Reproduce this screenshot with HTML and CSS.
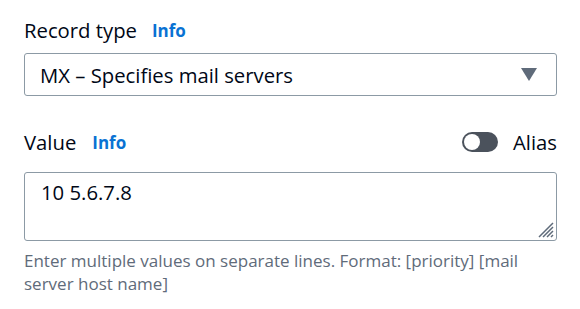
FILE: index.html
```html
<!DOCTYPE html>
<html lang="en">
  <head>
    <meta charset="UTF-8" />
    <meta name="viewport" content="width=device-width, initial-scale=1.0" />
    <title>Record</title>
    <link rel="stylesheet" href="styles.css">
  </head>

  <body>
    <div class="form">
      <div class="field">
        <div class="label-row">
          <span class="label">Record type</span>
          <a class="info" href="#">Info</a>
        </div>
        <div class="select">
          <span class="select-text">MX – Specifies mail servers</span>
          <svg class="caret" width="16" height="13" viewBox="0 0 16 13">
            <path d="M0 0 L16 0 L8 13 Z" fill="#5f6b7a" />
          </svg>
        </div>
      </div>

      <div class="field value">
        <div class="label-row between">
          <div class="label-group">
            <span class="label">Value</span>
            <a class="info" href="#">Info</a>
          </div>
          <label class="toggle">
            <span class="track"><span class="knob"></span></span>
            <span class="toggle-text">Alias</span>
          </label>
        </div>
        <div class="area-wrap">
          <textarea class="area">10 5.6.7.8</textarea>
          <svg class="grip" width="16" height="16" viewBox="0 0 16 16">
            <path d="M15 1 L1 15 M15 5 L5 15 M15 9 L9 15 M15 13 L13 15" stroke="#5f6b7a" stroke-width="1.5" />
          </svg>
        </div>
        <p class="hint">Enter multiple values on separate lines. Format: [priority] [mail server host name]</p>
      </div>
    </div>
  </body>
</html>
```

FILE: styles.css
```css
* {
  margin: 0;
  padding: 0;
  box-sizing: border-box;
}

body {
  font-family: "Open Sans", "Noto Sans", sans-serif;
  color: #000716;
  background: #fff;
}

.form {
  padding: 18px 23px 0 24px;
}

.label-row {
  display: flex;
  align-items: center;
  gap: 15px;
  height: 24px;
}

.label-row.between {
  justify-content: space-between;
  height: 28px;
}

.label-group {
  display: flex;
  align-items: center;
  gap: 16px;
}

.label {
  font-size: 20.3px;
  line-height: 24px;
}

.info {
  font-size: 17px;
  font-weight: 700;
  color: #0972d3;
  text-decoration: none;
}

.select {
  margin-top: 11px;
  height: 43px;
  border: 1px solid #8c9aa5;
  border-radius: 3px;
  display: flex;
  align-items: center;
  justify-content: space-between;
  padding: 0 19px 0 15px;
}

.select-text {
  font-size: 20.3px;
}

.value {
  margin-top: 32px;
}

.toggle {
  display: flex;
  align-items: center;
  gap: 15px;
}

.track {
  width: 36px;
  height: 20px;
  border-radius: 10px;
  background: #4b525c;
  display: flex;
  align-items: center;
  padding-left: 2px;
}

.knob {
  width: 16px;
  height: 16px;
  border-radius: 50%;
  background: #fff;
}

.toggle-text {
  font-size: 20.3px;
}

.area-wrap {
  position: relative;
  margin-top: 16px;
}

.area {
  display: block;
  width: 100%;
  height: 69px;
  border: 1px solid #8c9aa5;
  border-radius: 3px;
  padding: 7px 16px;
  font-family: inherit;
  font-size: 20.3px;
  line-height: 24px;
  color: #000716;
  resize: none;
  outline: none;
}

.grip {
  position: absolute;
  right: 3px;
  bottom: 3px;
}

.hint {
  margin-top: 8px;
  font-size: 17px;
  line-height: 23px;
  color: #5f6b7a;
}
```
